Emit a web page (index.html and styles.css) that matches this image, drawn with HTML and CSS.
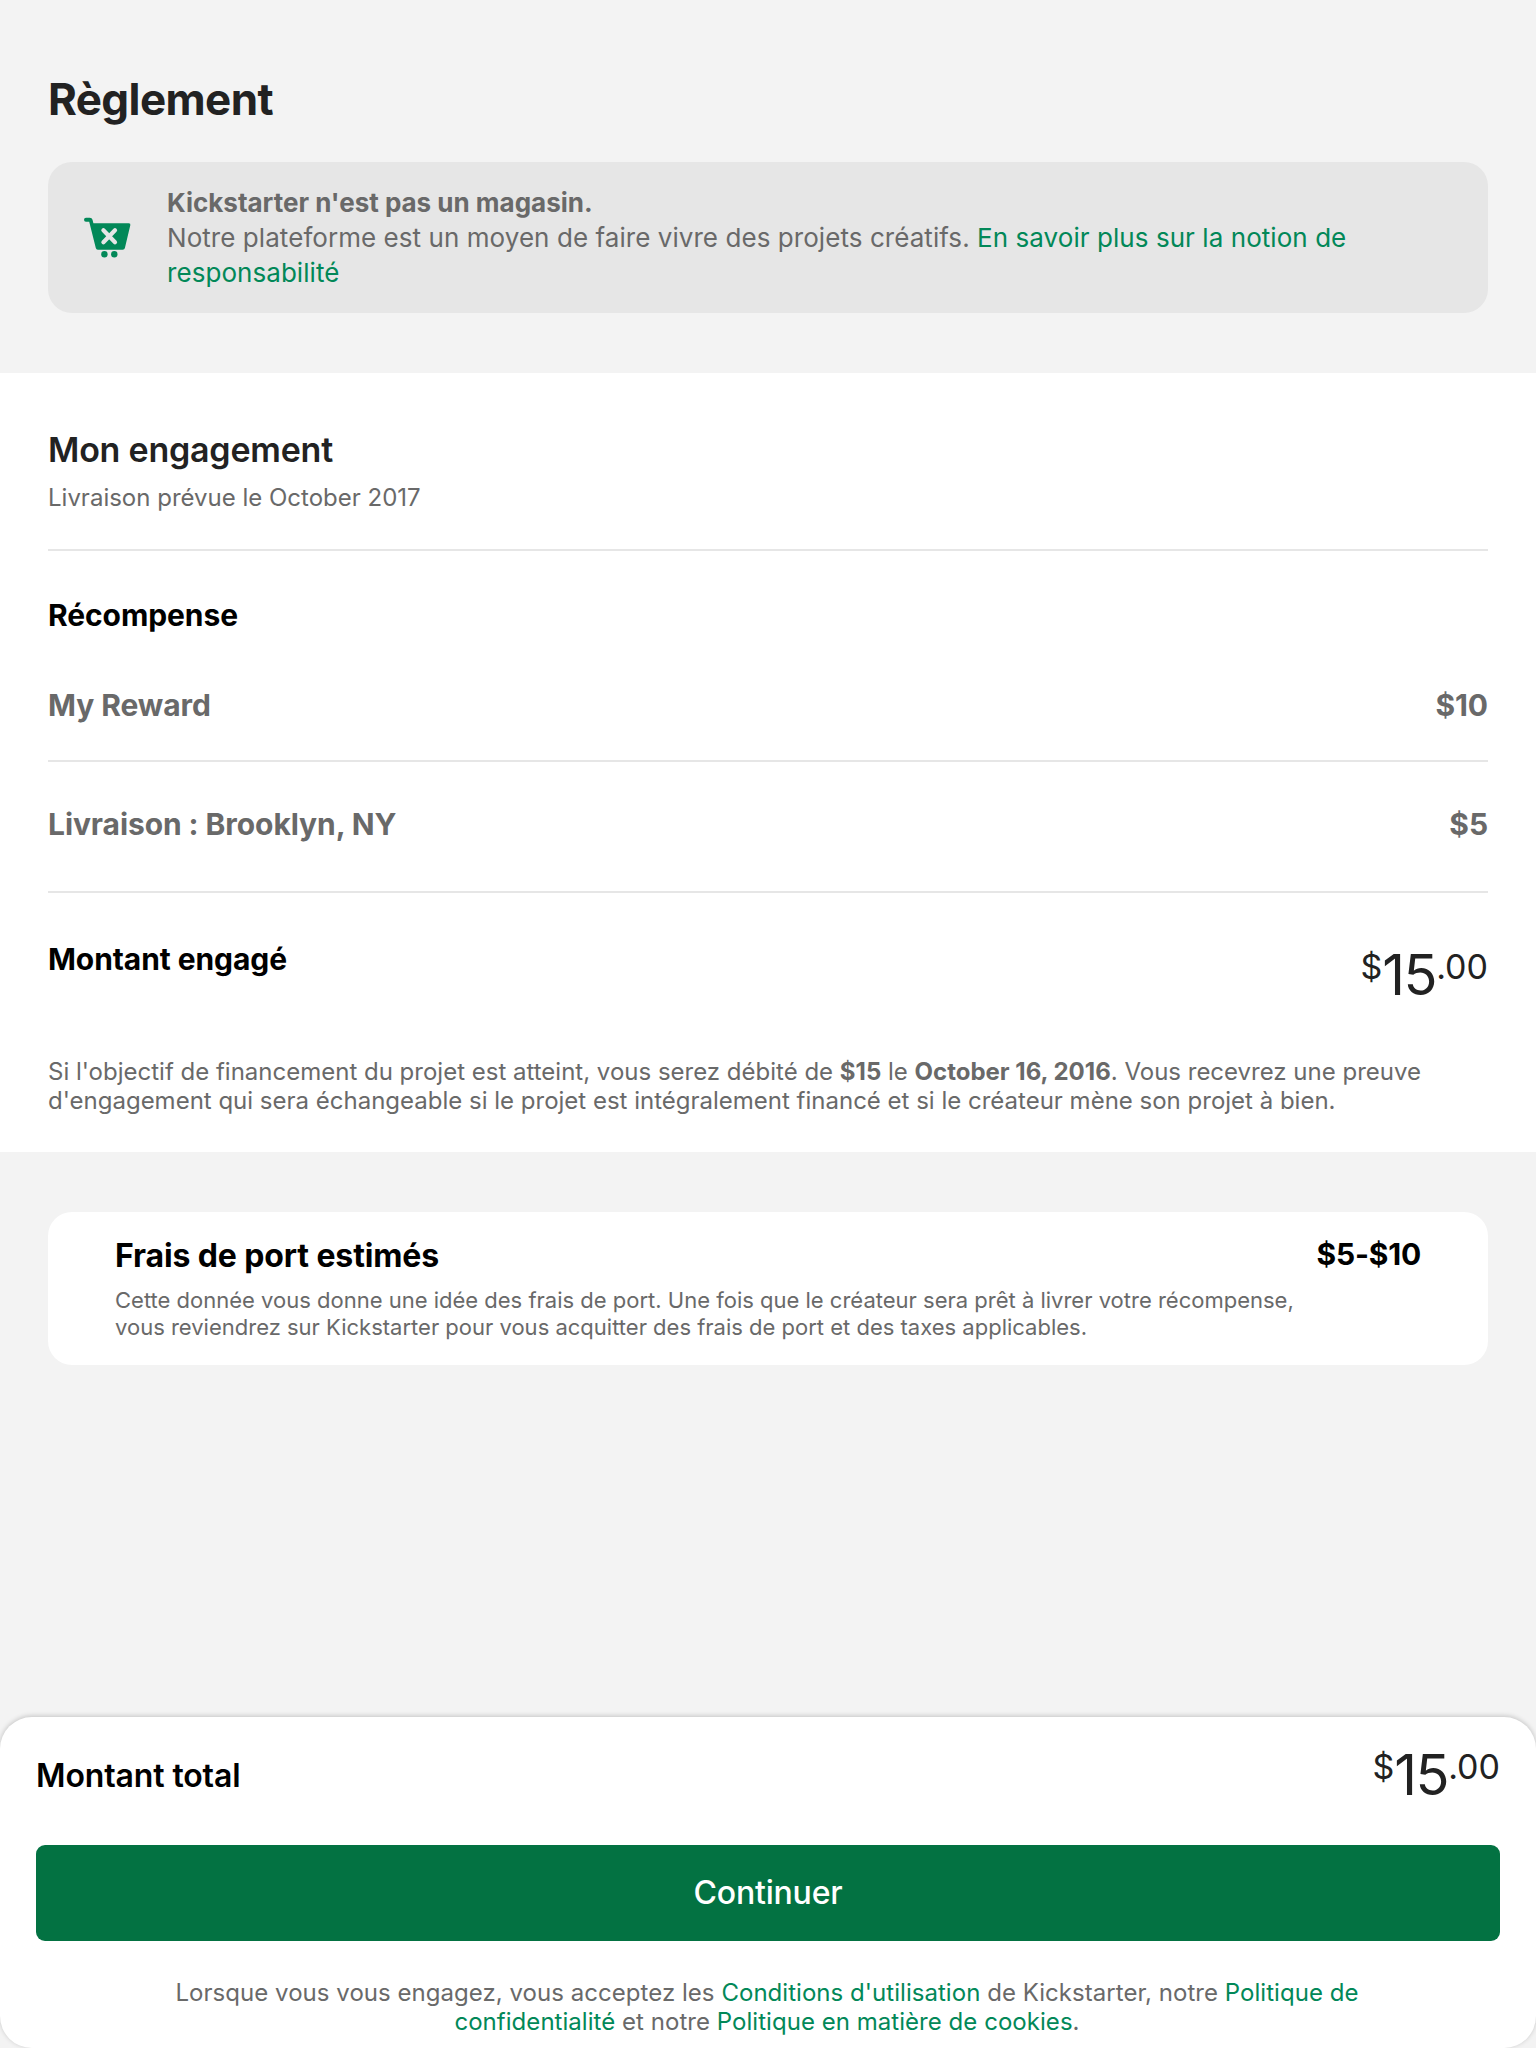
FILE: index.html
```html
<!DOCTYPE html>
<html lang="fr">
<head>
<meta charset="utf-8">
<title>Règlement</title>
<link rel="stylesheet" href="styles.css">
</head>
<body>
<main class="page">
  <header class="intro">
    <h1 class="page-title">Règlement</h1>
    <div class="notice">
      <svg class="notice-icon" viewBox="0 0 48 42" width="48" height="42" aria-hidden="true">
        <path fill="#028858" d="M2 .7H5.8Q8 .7 8.5 2.8L9.4 6.3H44.8Q46.8 6.3 46.3 8.3L40.9 31Q40.5 32.7 38.7 32.7H13.8Q12.2 32.7 11.8 31L5.2 4.7H2Q0 4.7 0 2.7T2 .7Z"/>
        <path stroke="#e6e6e6" stroke-width="4.2" stroke-linecap="round" fill="none" d="M19.4 13.2L31 25.2M31 13.2L19.4 25.2"/>
        <circle cx="20.4" cy="37.3" r="3.2" fill="#028858"/>
        <circle cx="30.3" cy="37.3" r="3.2" fill="#028858"/>
      </svg>
      <p class="notice-text"><strong>Kickstarter n'est pas un magasin.</strong><br>Notre plateforme est un moyen de faire vivre des projets créatifs. <a class="link">En savoir plus sur la notion de responsabilité</a></p>
    </div>
  </header>

  <section class="pledge">
    <h2 class="pledge-title">Mon engagement</h2>
    <p class="pledge-date">Livraison prévue le October 2017</p>
    <hr class="divider">
    <h3 class="label label-reward">Récompense</h3>
    <div class="row row-reward"><span>My Reward</span><span>$10</span></div>
    <hr class="divider">
    <div class="row row-shipping"><span>Livraison : Brooklyn, NY</span><span>$5</span></div>
    <hr class="divider">
    <div class="pledge-total">
      <h3 class="label">Montant engagé</h3>
      <div class="amount"><span class="amount-small">$</span><span class="amount-main">15</span><span class="amount-small">.00</span></div>
    </div>
    <p class="pledge-note">Si l'objectif de financement du projet est atteint, vous serez débité de <strong>$15</strong> le <strong>October 16, 2016</strong>. Vous recevrez une preuve d'engagement qui sera échangeable si le projet est intégralement financé et si le créateur mène son projet à bien.</p>
  </section>

  <section class="estimate">
    <div class="estimate-copy">
      <h3 class="estimate-title">Frais de port estimés</h3>
      <p class="estimate-text">Cette donnée vous donne une idée des frais de port. Une fois que le créateur sera prêt à livrer votre récompense, vous reviendrez sur Kickstarter pour vous acquitter des frais de port et des taxes applicables.</p>
    </div>
    <div class="estimate-price">$5-$10</div>
  </section>

  <footer class="checkout">
    <div class="checkout-total">
      <span class="checkout-label">Montant total</span>
      <div class="amount"><span class="amount-small">$</span><span class="amount-main">15</span><span class="amount-small">.00</span></div>
    </div>
    <button class="checkout-button" type="button">Continuer</button>
    <p class="legal">Lorsque vous vous engagez, vous acceptez les <a class="link">Conditions d'utilisation</a> de Kickstarter, notre <a class="link">Politique de confidentialité</a> et notre <a class="link">Politique en matière de cookies</a>.</p>
  </footer>
</main>
</body>
</html>
```

FILE: styles.css
```css
* {
  box-sizing: border-box;
}

body {
  margin: 0;
  background: #f3f3f3;
  color: #696969;
  font-family: Inter, "Liberation Sans", sans-serif;
}

h1, h2, h3, p {
  margin: 0;
}

.page {
  display: flex;
  flex-direction: column;
  width: 1536px;
  height: 2048px;
}

.link {
  color: #028858;
}

.intro {
  padding: 72px 48px 60px;
}

.page-title {
  color: #222;
  font-size: 44px;
  font-weight: 700;
  line-height: 54px;
  letter-spacing: -0.6px;
}

.notice {
  display: flex;
  align-items: center;
  gap: 35px;
  margin-top: 36px;
  padding: 23px 36px;
  border-radius: 24px;
  background: #e6e6e6;
}

.notice-icon {
  flex: none;
  margin-top: 1px;
}

.notice-text {
  font-size: 26px;
  line-height: 35px;
  letter-spacing: 0.058px;
}

.notice-text strong {
  letter-spacing: 0;
}

.pledge {
  padding: 56px 48px 37px;
  background: #fff;
}

.pledge-title {
  color: #222;
  font-size: 34px;
  font-weight: 600;
  line-height: 42px;
  letter-spacing: -0.22px;
}

.pledge-date {
  margin: 12px 0 37px;
  font-size: 24px;
  line-height: 29px;
}

.divider {
  height: 2px;
  margin: 0;
  border: 0;
  background: #e6e6e6;
}

.label {
  color: #000;
  font-size: 30px;
  font-weight: 700;
  line-height: 36px;
  letter-spacing: -0.08px;
}

.label-reward {
  margin-top: 46px;
}

.row {
  display: flex;
  justify-content: space-between;
  font-size: 30px;
  font-weight: 700;
  line-height: 36px;
  letter-spacing: -0.08px;
}

.row-reward {
  padding: 54px 0 37px;
}

.row-shipping {
  padding: 44px 0 49px;
}

.pledge-total {
  display: flex;
  justify-content: space-between;
  height: 116px;
  margin-top: 48px;
}

.amount {
  display: flex;
  color: #222;
  line-height: 68px;
}

.amount-main {
  font-size: 56px;
  letter-spacing: -1.5px;
}

.amount-small {
  font-size: 34px;
  line-height: 51px;
}

.pledge-note {
  font-size: 24px;
  line-height: 29px;
}

.estimate {
  display: flex;
  justify-content: space-between;
  margin: 60px 48px 0;
  padding: 24px 67px;
  border-radius: 24px;
  background: #fff;
}

.estimate-copy {
  width: 1190px;
}

.estimate-title {
  color: #000;
  font-size: 32px;
  font-weight: 700;
  line-height: 39px;
  letter-spacing: -0.12px;
}

.estimate-text {
  margin-top: 12px;
  font-size: 22px;
  line-height: 27px;
}

.estimate-price {
  color: #000;
  font-size: 30px;
  font-weight: 700;
  line-height: 36px;
  letter-spacing: -0.2px;
}

.checkout {
  height: 331px;
  margin-top: auto;
  padding: 24px 36px 12px;
  border-radius: 32px;
  background: #fff;
  box-shadow: 0 -1px 5px rgba(0, 0, 0, 0.2);
}

.checkout-total {
  display: flex;
  justify-content: space-between;
  height: 104px;
}

.checkout-label {
  margin-top: 15px;
  color: #000;
  font-size: 32px;
  font-weight: 600;
  line-height: 39px;
  letter-spacing: -0.12px;
}

.checkout-button {
  display: block;
  width: 100%;
  height: 96px;
  padding: 0 0 2px;
  border: 0;
  border-radius: 9px;
  background: #037242;
  color: #fff;
  font: 500 32px/39px Inter, "Liberation Sans", sans-serif;
  letter-spacing: -0.2px;
}

.legal {
  margin-top: 37px;
  padding: 0 131px 0 129px;
  font-size: 24px;
  line-height: 29px;
  letter-spacing: 0.04px;
  text-align: center;
}
```
